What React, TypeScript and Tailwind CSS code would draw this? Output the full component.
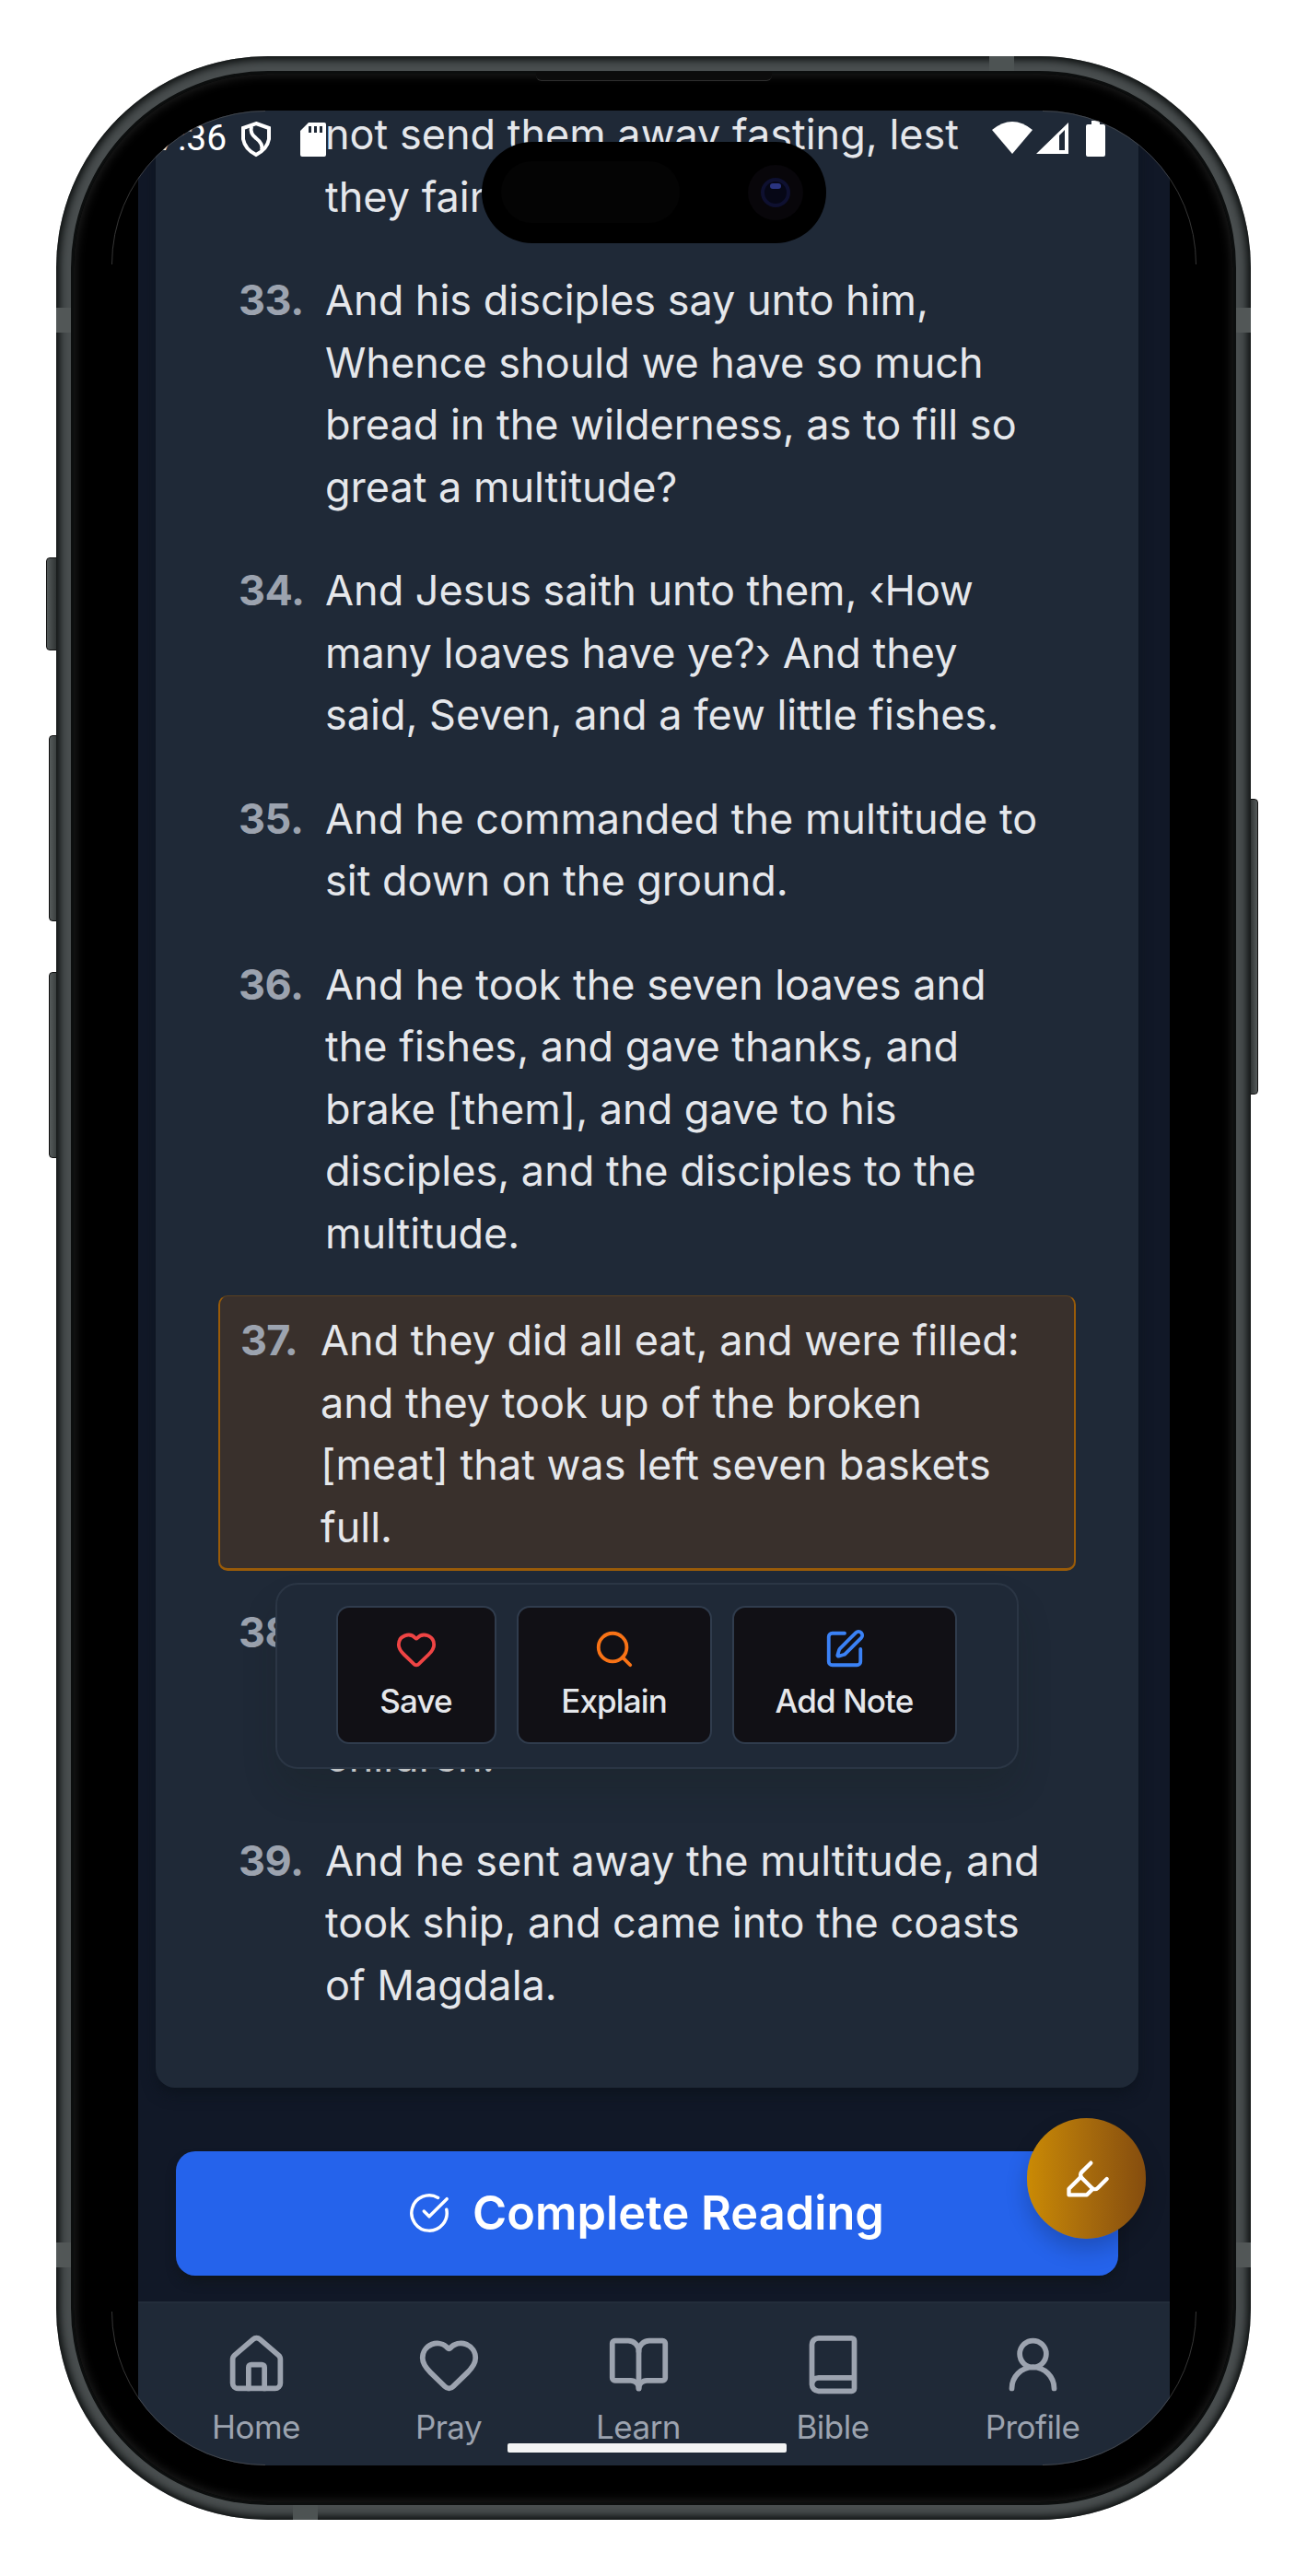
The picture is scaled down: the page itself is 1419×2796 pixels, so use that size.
import React from "react";
import { Heart, Search, SquarePen, CircleCheckBig, House, BookOpen, Book, UserRound, Highlighter } from "lucide-react";

const verses: { n: string; lines: string[] }[] = [
  { n: "33.", lines: ["And his disciples say unto him,", "Whence should we have so much", "bread in the wilderness, as to fill so", "great a multitude?"] },
  { n: "34.", lines: ["And Jesus saith unto them, ‹How", "many loaves have ye?› And they", "said, Seven, and a few little fishes."] },
  { n: "35.", lines: ["And he commanded the multitude to", "sit down on the ground."] },
  { n: "36.", lines: ["And he took the seven loaves and", "the fishes, and gave thanks, and", "brake [them], and gave to his", "disciples, and the disciples to the", "multitude."] },
];

function Lines({ lines }: { lines: string[] }) {
  return (
    <p className="whitespace-nowrap text-[#e5e7eb]">
      {lines.map((l) => (
        <span key={l} className="block">{l}</span>
      ))}
    </p>
  );
}

function Verse({ n, lines }: { n: string; lines: string[] }) {
  return (
    <div className="flex pb-[45px]">
      <span className="w-[94px] shrink-0 font-bold tracking-[-0.01em] text-[#9ca3af]">{n}</span>
      <Lines lines={lines} />
    </div>
  );
}

function Action({ icon, label, width }: { icon: React.ReactNode; label: string; width: string }) {
  return (
    <button className={`flex h-[150px] flex-col items-center rounded-[14px] border-2 border-[#303c4d] bg-[#111015] pt-[22px] text-[35px] leading-[42px] font-medium tracking-[-0.025em] text-[#e5e7eb] ${width}`}>
      {icon}
      <span className="mt-[12px]">{label}</span>
    </button>
  );
}

function NavItem({ icon, label }: { icon: React.ReactNode; label: string }) {
  return (
    <a className="flex flex-col items-center text-[35px] leading-[42px] tracking-[-0.015em] text-[#9ca3af]">
      {icon}
      <span className="mt-[12px]">{label}</span>
    </a>
  );
}

export default function App() {
  return (
    <div className="relative h-[2796px] w-[1419px] overflow-hidden bg-white pt-[61px] pl-[61px] font-['Inter',sans-serif]">
      {/* side buttons */}
      <div className="absolute top-[605px] left-[50px] h-[101px] w-[14px] rounded-l-[4px] border border-[#111] bg-linear-to-r from-[#555b5b] to-[#2a2e2e]" />
      <div className="absolute top-[798px] left-[53px] h-[202px] w-[14px] rounded-l-[4px] border border-[#111] bg-linear-to-r from-[#555b5b] to-[#2a2e2e]" />
      <div className="absolute top-[1055px] left-[53px] h-[202px] w-[14px] rounded-l-[4px] border border-[#111] bg-linear-to-r from-[#555b5b] to-[#2a2e2e]" />
      <div className="absolute top-[867px] left-[1352px] h-[321px] w-[14px] rounded-r-[4px] border border-[#111] bg-linear-to-l from-[#555b5b] to-[#1c1f1f]" />

      {/* metal frame */}
      <div className="relative h-[2674px] w-[1297px] overflow-hidden rounded-[230px] bg-[#494e4f] p-[16px] shadow-[inset_0_0_9px_4px_#0c0f0f]">
        <div className="absolute top-0 left-[1013px] h-[18px] w-[27px] bg-[#4d5353]" />
        <div className="absolute bottom-0 left-[257px] h-[18px] w-[27px] bg-[#4d5353]" />
        <div className="absolute top-[273px] left-0 h-[27px] w-full bg-[#525757]" />
        <div className="absolute top-[2373px] left-0 h-[27px] w-full bg-[#525757]" />

        {/* bezel */}
        <div className="relative h-full w-full rounded-[214px] border-3 border-[#0c0e0e] bg-black px-[41px] pt-[40px] shadow-[inset_0_0_12px_1px_#222222]">
          <div className="absolute top-[-2px] left-[502px] h-[10px] w-[256px] rounded-b-[6px] border-b border-[#2e2e2e] bg-[#0c0c0c]" />

          <div className="h-[2556px] w-[1178px] overflow-hidden rounded-[167px] bg-black px-[29px]">
            {/* screen */}
            <div className="relative h-full w-full bg-[#111827]">
              <div className="flex h-[2146px] pl-[19px]">
                <div className="flex w-[1067px] flex-col rounded-b-[21px] bg-[#1f2937] pl-[90px] text-[45px] leading-[67.5px] shadow-[0_8px_16px_-2px_#0c131d]">
                  <div className="mt-[-8px] pb-[45px] pl-[94px]">
                    <Lines lines={["not send them away fasting, lest", "they faint in the way."]} />
                  </div>
                  {verses.map((v) => (
                    <Verse key={v.n} n={v.n} lines={v.lines} />
                  ))}
                  <div className="mt-[-11px] mb-[33px] ml-[-22px] flex h-[299px] w-[931px] rounded-[10px] border-2 border-t border-b-[3px] border-[#9a5b08] border-t-[#5a4020] bg-[#39302c] pt-[14px] pl-[22px]">
                    <span className="w-[87px] shrink-0 font-bold tracking-[-0.02em] text-[#9ca3af]">37.</span>
                    <Lines lines={["And they did all eat, and were filled:", "and they took up of the broken", "[meat] that was left seven baskets", "full."]} />
                  </div>
                  <Verse n="38." lines={["And they that did eat were four", "thousand men, beside women and", "children."]} />
                  <Verse n="39." lines={["And he sent away the multitude, and", "took ship, and came into the coasts", "of Magdala."]} />
                </div>
              </div>

              <div className="mt-[69px] ml-[41px] flex h-[135px] w-[1023px] items-center justify-center gap-[24px] rounded-[21px] bg-[#2563eb] pr-[2px] pb-[1px] text-[50.5px] font-semibold text-white shadow-[0_8px_12px_-2px_#0f151c]">
                <CircleCheckBig size={46} strokeWidth={1.8} />
                Complete Reading
              </div>

              <nav className="mt-[28px] grid h-[178px] grid-cols-[208px_210px_202px_220px_214px] border-t-2 border-[#232d3b] bg-[#1f2937] pt-[32px] pl-[24px]">
                <NavItem icon={<House size={69} />} label="Home" />
                <NavItem icon={<Heart size={69} />} label="Pray" />
                <NavItem icon={<BookOpen size={69} />} label="Learn" />
                <NavItem icon={<Book size={69} />} label="Bible" />
                <NavItem icon={<UserRound size={69} />} label="Profile" />
              </nav>

              {/* verse action popup */}
              <div className="absolute top-[1598px] left-[149px] flex h-[202px] w-[807px] justify-center gap-[22px] rounded-[24px] border-2 border-[#2b3645] bg-[#1f2937] pt-[23px] pr-[2px] shadow-[0_24px_40px_-4px_rgba(20,28,20,0.2)]">
                <Action width="w-[174px]" icon={<Heart size={46} className="text-[#ef4444]" />} label="Save" />
                <Action width="w-[212px]" icon={<Search size={46} className="text-[#f97316]" />} label="Explain" />
                <Action width="w-[244px]" icon={<SquarePen size={46} className="text-[#3b82f6]" />} label="Add Note" />
              </div>

              {/* floating highlighter */}
              <div className="absolute top-[2179px] left-[965px] flex h-[131px] w-[129px] items-center justify-center rounded-full bg-linear-to-r from-[#ca8a04] to-[#854d0e] text-white shadow-[0_12px_24px_rgba(0,0,0,0.2)]">
                <Highlighter size={52} />
              </div>

              {/* status bar */}
              <div className="absolute top-[11px] left-0 h-[42px] w-full text-white">
                <span className="absolute top-0 left-[21px] font-['Roboto',sans-serif] text-[39px] leading-[38px]">7:36</span>
                <svg className="absolute top-0 left-[111px]" width="34" height="40" viewBox="0 0 34 40" fill="none" stroke="currentColor" strokeWidth="4">
                  <path d="M17 3 L31 8 V20 Q29 31 17 37 Q5 31 3 20 V8 Z" />
                  <path d="M12 6 Q10 14 17 19 Q25 25 23 32" />
                </svg>
                <svg className="absolute top-[2px] left-[176px]" width="28" height="37" viewBox="0 0 28 37" fill="currentColor">
                  <path fillRule="evenodd" d="M9 0H26Q28 0 28 2V35Q28 37 26 37H2Q0 37 0 35V9Z M9 4V11H12V4Z M15 4V11H18V4Z M21 4V11H24V4Z" />
                </svg>
                <svg className="absolute top-0 left-[927px]" width="44" height="36" viewBox="0 0 44 36" fill="currentColor">
                  <path d="M0 10Q22 -8 44 10L22 36Z" />
                </svg>
                <svg className="absolute top-[2px] left-[975px]" width="35" height="34" viewBox="0 0 35 34" fill="currentColor">
                  <path fillRule="evenodd" d="M35 0V34H0Z M25 14V30H31V8Z" />
                </svg>
                <svg className="absolute top-0 left-[1029px]" width="21" height="39" viewBox="0 0 21 39" fill="currentColor">
                  <path d="M6 0H15V4H19Q21 4 21 6V37Q21 39 19 39H2Q0 39 0 37V6Q0 4 2 4H6Z" />
                </svg>
              </div>

              {/* camera island */}
              <div className="absolute top-[34px] left-[373px] h-[110px] w-[374px] rounded-full bg-black p-[21px]">
                <div className="h-[67px] w-[194px] rounded-full bg-[#040404]" />
                <div className="absolute top-[25px] left-[289px] flex h-[60px] w-[60px] items-center justify-center rounded-full bg-[#08060a]">
                  <div className="flex h-[32px] w-[32px] justify-center rounded-full border-4 border-[#0e1030] bg-[#060716] pt-[2px]">
                    <div className="h-[6px] w-[12px] rounded-full bg-[#2a3480]" />
                  </div>
                </div>
              </div>

              {/* home indicator */}
              <div className="absolute top-[2532px] left-[401px] h-[10px] w-[303px] rounded-[2px] bg-[#f3f4f4]" />
            </div>
          </div>

          {/* glass edge highlights in the corners */}
          <svg className="pointer-events-none absolute top-[40px] left-[41px]" width="1179" height="2556" fill="none" stroke="#5a5a5a" strokeWidth="0.6">
            <path d="M0.5 167A166.5 166.5 0 0 1 167 0.5" />
            <path d="M1177.5 167A166.5 166.5 0 0 0 1011 0.5" />
            <path d="M0.5 2389A166.5 166.5 0 0 0 167 2555.5" />
            <path d="M1177.5 2389A166.5 166.5 0 0 1 1011 2555.5" />
          </svg>
        </div>
      </div>
    </div>
  );
}
